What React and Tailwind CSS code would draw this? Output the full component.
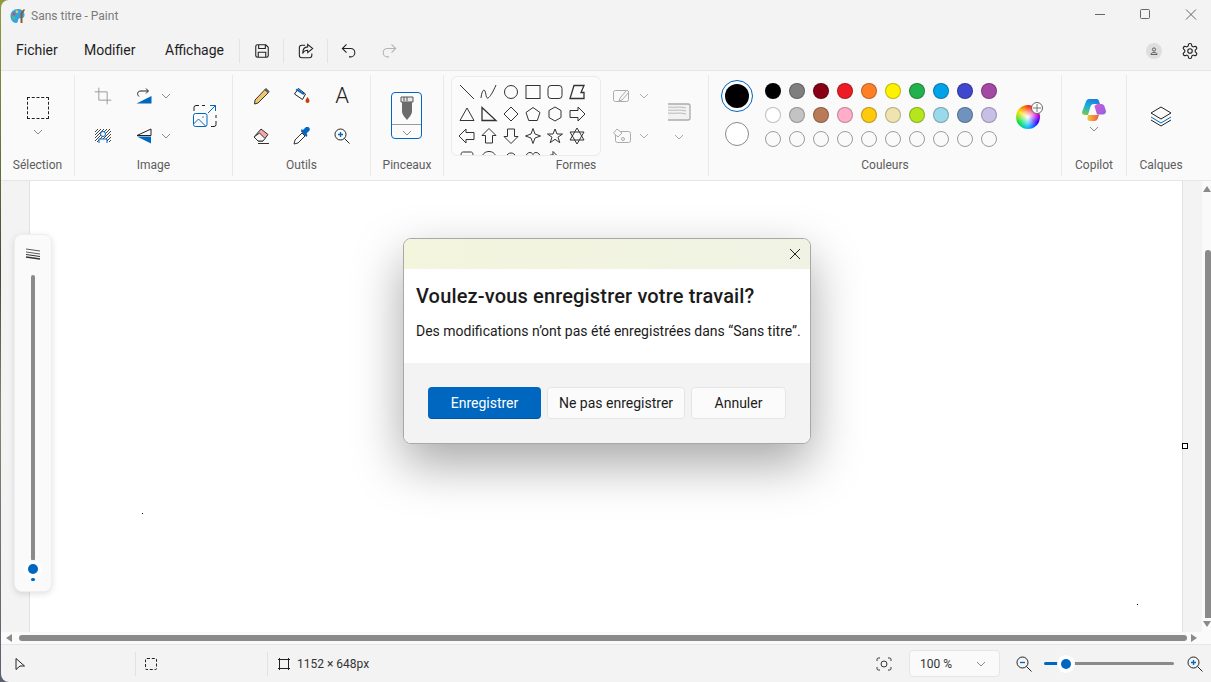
import React from "react";

const Chevron = ({ className = "" }) => (
  <svg width="10" height="6" viewBox="0 0 10 6" fill="none" stroke="#8a8a8a" strokeWidth="1" className={className}>
    <path d="M1 1l4 4 4-4" />
  </svg>
);

const Icon = ({ size = 24, children, className = "" }) => (
  <svg width={size} height={size} viewBox="0 0 24 24" fill="none" stroke="#222" strokeWidth="1" className={className}>
    {children}
  </svg>
);

const shapes = [
  <path d="M3 3l14 14" />,
  <path d="M2 16c1-8 3-9 4-7s1 8 3 7 5-6 8-13" />,
  <circle cx="10" cy="10" r="6.5" />,
  <rect x="3" y="3.5" width="14" height="13" />,
  <rect x="3" y="3.5" width="14" height="13" rx="3" />,
  <path d="M7 3.500h10l-3 7h3v6H3z" strokeWidth="1.300" />,
  <path d="M10 4l7 12.5H3z" />,
  <path d="M3 3.5l14 13H3z" strokeWidth="1.3" />,
  <path d="M10 3l7 7-7 7-7-7z" />,
  <path d="M10 3.5l7 5-2.7 8H5.7L3 8.5z" />,
  <path d="M10 3l6 3.5v7L10 17l-6-3.5v-7z" />,
  <path d="M3 6.5h8V3l7 7-7 7v-3.5H3z" />,
  <path d="M17 6.5H9V3l-7 7 7 7v-3.5h8z" />,
  <path d="M10 2.5l7 7h-3.5V17h-7V9.5H3z" />,
  <path d="M10 17.5l7-7h-3.5V3h-7v7.5H3z" />,
  <path d="M10 2.5l2 5.5 5.5 2-5.5 2-2 5.5-2-5.5-5.5-2 5.500-2z" />,
  <path d="M10 3l2 5h5.500l-4.500 3.200 1.800 5.500-4.800-3.400-4.800 3.400 1.800-5.500L2.500 8H8z" />,
  <path d="M10 2l7 12H3z M10 18L3 6h14z" />,
  <path d="M4 8c0-4 1-4 3-4h6c2 0 3 0 3 4" />,
  <path d="M3 9c1-4 4-5.500 7-5.500s6 1.500 7 5.500" />,
  <path d="M5 9c1-3 3-4 5-4s4 1 5 4" />,
  <path d="M3 9c0-3 2-4.500 4-4.500 1.500 0 2.500 1 3 2 .5-1 1.500-2 3-2 2 0 4 1.500 4 4.500" />,
  <path d="M5 9V7h3V3.500l4 4" />,
];

const topColors = ["#000000", "#7f7f7f", "#880015", "#ed1c24", "#ff7f27", "#fff200", "#22b14c", "#00a2e8", "#3f48cc", "#a349a4"];
const midColors = ["#ffffff", "#c3c3c3", "#b97a57", "#ffaec9", "#ffc90e", "#efe4b0", "#b5e61d", "#99d9ea", "#7092be", "#c8bfe7"];
const blankColors = Array(10).fill("transparent");

const Group = ({ label, width, children, last }) => (
  <div className={`flex h-[101px] shrink-0 flex-col ${last ? "" : "border-r border-[#e9e9e9]"}`} style={{ width }}>
    <div className="h-[81px] shrink-0">{children}</div>
    <div className="text-center text-[12px] leading-[18px] text-[#5d5d5d]">{label}</div>
  </div>
);

const IconCell = ({ children }) => <div className="flex h-6 w-6 items-center justify-center">{children}</div>;

function TitleBar() {
  return (
    <div className="flex h-[32px] items-center pl-[9px]">
      <svg width="16" height="16" viewBox="0 0 16 16">
        <path d="M8 1C3.500 1 .5 4 .5 8s2.500 7 5.500 7c1.500 0 2-1 2-2.500S9 10 11 10s3.500-.5 3.500-3C14.500 3.500 12 1 8 1z" fill="#35a4e0" />
        <circle cx="4" cy="6" r="1.400" fill="#e8483a" />
        <circle cx="7" cy="3.800" r="1.300" fill="#f6c945" />
        <circle cx="3.800" cy="10" r="1.400" fill="#5cc25a" />
        <path d="M11 4l3-3 1 1-2.500 3.500V15H10.500V6z" fill="#8a5a32" />
      </svg>
      <span className="ml-[5px] text-[12px] text-[#7a7a7a]">Sans titre - Paint</span>
      <div className="ml-auto flex items-center">
        <svg width="46" height="32" viewBox="0 0 46 32" stroke="#666" fill="none">
          <path d="M22 14.500h10" />
        </svg>
        <svg width="46" height="32" viewBox="0 0 46 32" stroke="#666" fill="none">
          <rect x="21.500" y="9.500" width="9" height="9" rx="1" />
        </svg>
        <svg width="46" height="32" viewBox="0 0 46 32" stroke="#666" fill="none">
          <path d="M21 9.500l10 10m0-10l-10 10" />
        </svg>
      </div>
    </div>
  );
}

function MenuBar() {
  return (
    <div className="flex h-[39px] items-center border-b border-[#e6e6e6] pb-[1px] text-[14px] text-[#1f1f1f]">
      <span className="ml-[15px] w-[40px]">Fichier</span>
      <span className="ml-[28px] w-[53px]">Modifier</span>
      <span className="ml-[28px] w-[58px]">Affichage</span>
      <div className="ml-[16px] h-[24px] border-l border-[#e3e3e3]" />
      <Icon size={20} className="ml-[12px] mr-[11px]">
        <path d="M4.500 6.500a2 2 0 0 1 2-2h10l3 3v10a2 2 0 0 1-2 2h-11a2 2 0 0 1-2-2z M8 4.500v4.500h8V4.500 M7.500 19.500v-6h9v6" strokeWidth="1.300" />
      </Icon>
      <div className="h-[24px] border-l border-[#e3e3e3]" />
      <Icon size={20} className="ml-[12px] mr-[11px]">
        <path d="M11 5H7a3 3 0 0 0-3 3v9a3 3 0 0 0 3 3h9a3 3 0 0 0 3-3v-2 M14 4l6 5-6 5v-3c-3 0-5 1-6 4 0-5 2-8 6-8z" strokeWidth="1.300" />
      </Icon>
      <div className="h-[24px] border-l border-[#e3e3e3]" />
      <Icon size={20} className="ml-[11px]">
        <path d="M9 4L4 9l5 5 M4 9h10a5 5 0 0 1 0 10h-2" strokeWidth="1.300" />
      </Icon>
      <Icon size={20} className="ml-[20px] opacity-30">
        <path d="M15 4l5 5-5 5 M20 9H10a5 5 0 0 0 0 10h2" strokeWidth="1.300" />
      </Icon>
      <div className="ml-auto mr-[12px] flex items-center gap-[19px]">
        <div className="flex h-4 w-4 items-center justify-center rounded-full bg-[#dedede]">
          <svg width="8" height="8" viewBox="0 0 8 8" fill="none" stroke="#444" strokeWidth=".8">
            <circle cx="4" cy="2.500" r="1.600" />
            <path d="M1 7.500c0-1.500 1-2 3-2s3 .5 3 2z" />
          </svg>
        </div>
        <svg width="18" height="18" viewBox="0 0 24 24" fill="none" stroke="#222" strokeWidth="1.500">
          <path d="M12.220 2h-.44a2 2 0 0 0-2 2v.18a2 2 0 0 1-1 1.730l-.43.250a2 2 0 0 1-2 0l-.15-.080a2 2 0 0 0-2.730.730l-.22.380a2 2 0 0 0 .730 2.730l.150.100a2 2 0 0 1 1 1.720v.510a2 2 0 0 1-1 1.740l-.150.090a2 2 0 0 0-.730 2.730l.220.380a2 2 0 0 0 2.730.730l.150-.080a2 2 0 0 1 2 0l.430.250a2 2 0 0 1 1 1.730V20a2 2 0 0 0 2 2h.440a2 2 0 0 0 2-2v-.180a2 2 0 0 1 1-1.730l.430-.250a2 2 0 0 1 2 0l.150.080a2 2 0 0 0 2.730-.730l.220-.390a2 2 0 0 0-.730-2.730l-.150-.080a2 2 0 0 1-1-1.740v-.500a2 2 0 0 1 1-1.740l.150-.090a2 2 0 0 0 .730-2.730l-.220-.380a2 2 0 0 0-2.730-.730l-.150.080a2 2 0 0 1-2 0l-.430-.250a2 2 0 0 1-1-1.730V4a2 2 0 0 0-2-2z" />
          <circle cx="12" cy="12" r="3" />
        </svg>
      </div>
    </div>
  );
}

function Ribbon() {
  return (
    <div className="flex h-[110px] items-start border-b border-[#e6e6e6] bg-[#fafafa] pt-[4px]">
      <Group label="Sélection" width={74}>
        <div className="ml-[26px] mt-[22px] h-[22px] w-[22px] border border-dashed border-[#222]" />
        <Chevron className="ml-[32px] mt-[10px]" />
      </Group>

      <Group label="Image" width={158}>
        <div className="grid grid-cols-[24px_41px_37px_24px] grid-rows-[24px_24px] items-center gap-y-4 pl-[16px] pt-[9px]">
          <IconCell>
            <Icon size={20} className="opacity-50">
              <path d="M7 2v15h15 M2 7h15v15" />
            </Icon>
          </IconCell>
          <div className="ml-[17px] flex h-6 w-6 items-center justify-center">
            <svg width="16" height="16" viewBox="0 0 16 16">
              <path d="M15.500 8v7.500H.5z" fill="#0067c0" />
              <path d="M3 8.500C.5 6 1.500 3 5 3h7M10 .5L12.500 3 10 5.500" fill="none" stroke="#222" />
            </svg>
          </div>
          <Chevron className="ml-[5px]" />
          <div className="row-span-2 flex h-6 w-6 items-center justify-center self-center">
            <svg width="24" height="24" viewBox="0 0 24 24" fill="none" stroke="#222">
              <path d="M1 7V3.500A2 2 0 0 1 3 1.500h3 M9 1.500h3 M23 11v3 M23 17v3.500a2 2 0 0 1-2 2h-3" />
              <path d="M15 9l7.500-7.500 M17 1.500h5.500V7" stroke="#0067c0" />
              <rect x=".5" y="9.500" width="13.500" height="13" rx="2" stroke="#0067c0" />
              <path d="M.5 20l5-5 7 7" stroke="#0067c0" />
              <circle cx="10" cy="13" r=".7" fill="#0067c0" stroke="none" />
            </svg>
          </div>
          <IconCell>
            <svg width="16" height="14" viewBox="0 0 16 14">
              <path d="M0 3l3-3M0 6l6-6M0 9l9-9M0 12L12 0M2 13L15 0M5 13L16 2M8 13l8-8M11 13l5-5M14 13l2-2" stroke="#444" strokeWidth="1" />
              <circle cx="8" cy="5" r="2.500" fill="#fafafa" stroke="#0067c0" />
              <path d="M4 14v-4h8v4" fill="#fafafa" stroke="#0067c0" />
            </svg>
          </IconCell>
          <div className="ml-[17px] flex h-6 w-6 items-center justify-center">
            <svg width="16" height="16" viewBox="0 0 16 16">
              <path d="M15 1v6.500H1z" fill="none" stroke="#222" />
              <path d="M15 15.500V8.500H1z" fill="#0067c0" />
            </svg>
          </div>
          <Chevron className="ml-[5px]" />
        </div>
      </Group>

      <Group label="Outils" width={138}>
        <div className="grid grid-cols-[24px_24px_24px] grid-rows-[24px_24px] gap-x-4 gap-y-4 pl-[17px] pt-[9px]">
          <IconCell>
            <svg width="18" height="18" viewBox="0 0 18 18">
              <path d="M2 13L12 2.500l3.500 3L5 16 1.500 17z" fill="#f2c66d" stroke="#333" />
              <path d="M12 2.500l1-1 3 3-1 1z" fill="#888" stroke="#333" />
            </svg>
          </IconCell>
          <IconCell>
            <svg width="18" height="18" viewBox="0 0 18 18">
              <path d="M5.500 1.500l7 5.500-3 5.500-8-5.500z" fill="#fff" stroke="#222" />
              <path d="M4 1.500l7.500 5-1 1.500L2.500 3z" fill="#0067c0" />
              <path d="M14.500 10c1 1.500 2 2.500 2 4a2 2 0 0 1-4 0c0-1.500 1-2.500 2-4z" fill="#c4400f" />
            </svg>
          </IconCell>
          <IconCell>
            <span className="text-[22px] font-light leading-none text-[#222]">A</span>
          </IconCell>
          <IconCell>
            <svg width="18" height="16" viewBox="0 0 18 16">
              <path d="M1 9l7-8 7 5.500L10 13H5z" fill="#f2a9a9" stroke="#333" />
              <path d="M1 9l4 4h5l2-2.500L6.500 5z" fill="#f7f7f7" stroke="#333" />
              <path d="M5 15.500h11" stroke="#333" />
            </svg>
          </IconCell>
          <IconCell>
            <svg width="18" height="18" viewBox="0 0 18 18">
              <path d="M9 6L2 13l-1 4 4-1 7-7z" fill="#fff" stroke="#333" />
              <path d="M8 4.500l5.500 5.500 1-2-1-1.500 3-3c.5-1 .5-2-.5-3s-2-1-3-.5l-3 3-1.500-1z" fill="#0067c0" />
            </svg>
          </IconCell>
          <IconCell>
            <svg width="16" height="16" viewBox="0 0 16 16" fill="none">
              <circle cx="6.500" cy="6.500" r="5.500" stroke="#222" />
              <path d="M10.500 10.500l5 5" stroke="#222" />
              <path d="M6.500 4v5M4 6.500h5" stroke="#0067c0" strokeWidth="1.300" />
            </svg>
          </IconCell>
        </div>
      </Group>

      <Group label="Pinceaux" width={73}>
        <div className="ml-[20px] mt-[17px] flex h-[47px] w-[31px] flex-col items-center rounded-[4px] border border-[#0067c0] bg-[#fbfbfb]">
          <svg width="16" height="30" viewBox="0 0 16 30" className="mt-[1px]">
            <path d="M2 3h12v5H2z" fill="#e6e6e6" stroke="#555" />
            <path d="M3 8h10v9c0 4-3 6-5 9-2-3-5-5-5-9z" fill="#6b6b6b" />
            <path d="M5 3v4M8 3v4" stroke="#555" />
          </svg>
          <div className="w-full border-t border-[#9a9a9a]" />
          <Chevron className="mt-[5px]" />
        </div>
      </Group>

      <Group label="Formes" width={265}>
        <div className="flex">
          <div className="ml-[7px] mt-[1px] h-[80px] w-[150px] shrink-0 overflow-hidden rounded-[6px] border border-[#ebebeb] bg-[#fbfbfb]">
            <div className="grid grid-cols-[repeat(6,22px)] grid-rows-[repeat(4,22px)] pl-[4px] pt-[4px]">
              {shapes.map((shape, i) => (
                <svg key={i} width="20" height="20" viewBox="0 0 20 20" fill="none" stroke="#333" className="m-[1px]">
                  {shape}
                </svg>
              ))}
            </div>
          </div>
          <div className="ml-[12px] mt-[9px] grid grid-cols-[18px_16px] grid-rows-[24px_24px] items-center gap-x-[8px] gap-y-4 opacity-70">
            <svg width="18" height="14" viewBox="0 0 18 14" fill="none" stroke="#8a8a8a">
              <rect x=".5" y="1.500" width="15" height="11" rx="2" />
              <path d="M6 12l1-3 7-8 2 2-7 8z" fill="#fafafa" />
            </svg>
            <Chevron />
            <svg width="18" height="16" viewBox="0 0 18 16" fill="none" stroke="#8a8a8a">
              <rect x="2.500" y="3.500" width="15" height="11" rx="2" />
              <path d="M4 1L.5 5 5 9l4-4z" fill="#fafafa" />
              <circle cx="10" cy="11" r="1.500" />
            </svg>
            <Chevron />
          </div>
          <div className="ml-[12px] mt-[27px] flex w-[24px] flex-col items-center opacity-70">
            <svg width="24" height="20" viewBox="0 0 24 20" fill="none" stroke="#8a8a8a">
              <rect x="1" y="1" width="22" height="17" rx="2" stroke="none" fill="#f0f0f0" />
              <path d="M1 2h20a2 2 0 0 1 2 2v12a2 2 0 0 1-2 2H1" strokeWidth="1.300" />
              <path d="M1 5c6 1 12-1 18 1M1 8c6 1 12-1 18 1M1 11c6 1 12-1 18 1" strokeWidth=".8" />
            </svg>
            <Chevron className="mt-[12px]" />
          </div>
        </div>
      </Group>

      <Group label="Couleurs" width={353}>
        <div className="flex">
          <div className="ml-[12px] mt-[5px] flex w-[32px] flex-col items-center">
            <div className="flex h-8 w-8 items-center justify-center rounded-full border border-[#0067c0] bg-white">
              <div className="h-6 w-6 rounded-full bg-black" />
            </div>
            <div className="mt-[10px] h-6 w-6 rounded-full border border-[#8a8a8a] bg-white" />
          </div>
          <div className="ml-[12px] mt-[8px] grid grid-cols-[repeat(10,16px)] grid-rows-[repeat(3,16px)] gap-2">
            {[...topColors, ...midColors].map((color, i) => (
              <div key={i} className="rounded-full border border-black/25" style={{ backgroundColor: color }} />
            ))}
            {blankColors.map((_, i) => (
              <div key={i} className="rounded-full border border-[#9c9c9c]" />
            ))}
          </div>
          <div className="relative ml-[19px] mt-[30px] h-6 w-6 rounded-full bg-[conic-gradient(#ff3000,#ff00c0,#3000ff,#00c0ff,#00e040,#ffe000,#ff3000)]">
            <div className="h-full w-full rounded-full bg-[radial-gradient(circle,#ffffff_0%,#ffffff00_65%)]" />
            <div className="absolute -right-[3px] -top-[3px] flex h-3 w-3 items-center justify-center rounded-full border border-[#666] bg-white">
              <svg width="8" height="8" viewBox="0 0 8 8" stroke="#777">
                <path d="M4 0v8M0 4h8" />
              </svg>
            </div>
          </div>
        </div>
      </Group>

      <Group label="Copilot" width={65}>
        <div className="flex flex-col items-center pt-[24px]">
          <svg width="24" height="22" viewBox="0 0 24 22">
            <defs>
              <linearGradient id="copA" x1="0.6" y1="0" x2="0.2" y2="1">
                <stop offset="0" stopColor="#1b7fe0" />
                <stop offset="0.5" stopColor="#1bb0d8" />
                <stop offset="1" stopColor="#7cc84a" />
              </linearGradient>
              <linearGradient id="copB" x1="0" y1="0" x2="1" y2="1">
                <stop offset="0" stopColor="#d85ad0" />
                <stop offset="1" stopColor="#8d62e8" />
              </linearGradient>
              <linearGradient id="copD" x1="0" y1="0" x2="1" y2="0">
                <stop offset="0" stopColor="#f2c93a" />
                <stop offset="1" stopColor="#ee5a3a" />
              </linearGradient>
            </defs>
            <path d="M7 0h7c1.500 0 2.500.5 3 2l1 3h-6c-2 0-3 1-3.500 2.500L6 16H3c-2 0-3.500-1.500-2.800-3.500L4 2.500C4.500 1 5.500 0 7 0z" fill="url(#copA)" />
            <path d="M18 5h1.500c1.500 0 2.500 1 3 2.500l1.300 4c.6 2-.6 4-3 4H15l-2.500-8c.5-1.500 2-2.500 3.500-2.500z" fill="url(#copB)" />
            <path d="M6 16h9.500l1.500-.5-1 3.500c-.5 2-2 3-3.500 3H8c-2 0-3-1.500-2.500-3.500z" fill="url(#copD)" />
          </svg>
          <Chevron className="mt-[5px]" />
        </div>
      </Group>

      <Group label="Calques" width={68} last>
        <div className="flex justify-center pt-[29px]">
          <svg width="24" height="24" viewBox="0 0 24 24" fill="none" stroke="#222">
            <path d="M12 3l10 6-10 6L2 9z" />
            <path d="M2 13l10 6 10-6" stroke="#0067c0" />
            <path d="M2 16l10 6 10-6" />
          </svg>
        </div>
      </Group>
    </div>
  );
}

function CanvasArea() {
  return (
    <div className="relative flex min-h-0 flex-1 flex-col">
      <div className="flex min-h-0 flex-1">
        <div className="w-[29px] shrink-0 border-r border-[#e2e2e2]" />
        <div className="relative flex-1 bg-white">
          <div className="absolute left-[112px] top-[332px] h-px w-px bg-black" />
          <div className="absolute left-[1107px] top-[423px] h-px w-px bg-black" />
        </div>
        <div className="relative w-[20px] shrink-0 border-l border-[#e2e2e2]">
          <div className="absolute -left-[1px] top-[262px] h-[6px] w-[6px] border border-black bg-white" />
        </div>
        {/* vertical scrollbar */}
        <div className="flex w-[9px] shrink-0 flex-col items-end bg-[#fafafa]">
          <div className="mt-[5px] h-0 w-0 border-x-[4px] border-b-[6px] border-x-transparent border-b-[#8a8a8a]" />
          <div className="mt-[58px] w-[6px] flex-1 rounded-t-full bg-[#8a8a8a]" />
          <div className="mb-[5px] mt-[3px] h-0 w-0 border-x-[4px] border-t-[6px] border-x-transparent border-t-[#8a8a8a]" />
        </div>
      </div>
      {/* horizontal scrollbar */}
      <div className="flex h-[13px] shrink-0 items-center border-b border-[#e6e6e6] bg-[#fafafa] pl-[5px] pr-[14px]">
        <div className="h-0 w-0 border-y-[4px] border-r-[6px] border-y-transparent border-r-[#8a8a8a]" />
        <div className="ml-[7px] h-[6px] flex-1 rounded-full bg-[#8a8a8a]" />
        <div className="ml-[4px] h-0 w-0 border-y-[4px] border-l-[6px] border-y-transparent border-l-[#8a8a8a]" />
      </div>

      {/* brush size slider */}
      <div className="absolute left-[13px] top-[53px] flex h-[358px] w-[38px] flex-col items-center rounded-[8px] border border-[#eeeeee] bg-[#fafafa] shadow-[0_2px_6px_rgba(0,0,0,0.12)]">
        <svg width="16" height="12" viewBox="0 0 16 12" fill="none" stroke="#333" className="mt-[13px]">
          <path d="M1 1l14 2M1 4l14 2" strokeWidth=".8" />
          <path d="M1 6.500l14 2" strokeWidth="1" />
          <path d="M1 9l14 2" strokeWidth="1.400" />
        </svg>
        <div className="mt-[15px] h-[286px] w-1 rounded-full bg-[#8a8a8a]" />
        <div className="relative -mt-[1px] flex h-[18px] w-[18px] items-center justify-center rounded-full bg-white">
          <div className="h-[10px] w-[10px] rounded-full bg-[#0067c0]" />
        </div>
        <div className="h-[3px] w-[4px] rounded-full bg-[#0067c0]" />
      </div>
    </div>
  );
}

function StatusBar() {
  return (
    <div className="flex h-[37px] shrink-0 items-center text-[12px] text-[#333]">
      <div className="flex h-[24px] w-[135px] items-center border-r border-[#e2e2e2] pl-[13px]">
        <svg width="12" height="14" viewBox="0 0 12 14" fill="none" stroke="#222">
          <path d="M2 1.500l8.500 7.500H6l-4 3.500z" />
        </svg>
      </div>
      <div className="flex h-[24px] w-[132px] items-center border-r border-[#e2e2e2] pl-[9px]">
        <div className="h-[12px] w-[12px] rounded-[2px] border border-dashed border-[#222]" />
      </div>
      <div className="flex items-center pl-[9px]">
        <svg width="14" height="14" viewBox="0 0 14 14" fill="none" stroke="#222">
          <rect x="2.500" y="2.500" width="9" height="9" />
          <path d="M1 2.500h2M11 2.500h2M1 11.500h2M11 11.500h2M2.500 1v2M11.500 1v2M2.500 11v2M11.500 11v2" />
        </svg>
        <span className="ml-[6px]">1152 × 648px</span>
      </div>
      <div className="ml-auto flex items-center pr-[8px]">
        <svg width="16" height="14" viewBox="0 0 16 14" fill="none" stroke="#333">
          <path d="M1 4V2.500A1.500 1.500 0 0 1 2.500 1H4M12 1h1.500A1.500 1.500 0 0 1 15 2.500V4M15 10v1.500a1.500 1.500 0 0 1-1.500 1.500H12M4 13H2.500A1.500 1.500 0 0 1 1 11.500V10" />
          <circle cx="8" cy="7" r="3" />
        </svg>
        <div className="ml-[17px] flex h-[27px] w-[91px] items-center rounded-[4px] border border-[#e5e5e5] bg-[#fafafa] pl-[10px] pr-[13px]">
          <span>100 %</span>
          <Chevron className="ml-auto" />
        </div>
        <svg width="16" height="16" viewBox="0 0 16 16" fill="none" className="ml-[16px]">
          <circle cx="6.500" cy="6.500" r="5.500" stroke="#222" />
          <path d="M10.500 10.500l5 5" stroke="#222" />
          <path d="M4 6.500h5" stroke="#0067c0" strokeWidth="1.300" />
        </svg>
        <div className="relative ml-[12px] flex h-[18px] w-[130px] items-center">
          <div className="h-[3px] w-[20px] rounded-l-full bg-[#0067c0]" />
          <div className="h-[3px] flex-1 rounded-r-full bg-[#8a8a8a]" />
          <div className="absolute left-[13px] flex h-[18px] w-[18px] items-center justify-center rounded-full bg-white">
            <div className="h-[10px] w-[10px] rounded-full bg-[#0067c0]" />
          </div>
        </div>
        <svg width="16" height="16" viewBox="0 0 16 16" fill="none" className="ml-[13px]">
          <circle cx="6.500" cy="6.500" r="5.500" stroke="#222" />
          <path d="M10.500 10.500l5 5" stroke="#222" />
          <path d="M6.500 4v5M4 6.500h5" stroke="#0067c0" strokeWidth="1.300" />
        </svg>
      </div>
    </div>
  );
}

function SaveDialog() {
  return (
    <div className="absolute left-[403px] top-[238px] flex h-[206px] w-[408px] flex-col overflow-hidden rounded-[8px] border border-[#a8a8a8] bg-white shadow-[0_20px_50px_rgba(0,0,0,0.35)]">
      <div className="flex h-[30px] shrink-0 items-center justify-end bg-[linear-gradient(90deg,#f3f5dd,#f0f3e4)] pr-[9px]">
        <svg width="12" height="12" viewBox="0 0 12 12" stroke="#222" fill="none">
          <path d="M1 1l10 10M11 1L1 11" />
        </svg>
      </div>
      <div className="h-[94px] shrink-0 px-[12px] pt-[13px]">
        <div className="whitespace-nowrap text-[20px] font-medium leading-[28px] tracking-[0.16px] text-[#1b1b1b]">Voulez-vous enregistrer votre travail?</div>
        <div className="mt-[11px] whitespace-nowrap text-[14px] leading-[20px] text-[#1b1b1b]">Des modifications n’ont pas été enregistrées dans “Sans titre”.</div>
      </div>
      <div className="flex flex-1 items-start bg-[#f3f3f3] pl-[24px] pt-[24px] text-[14px]">
        <button className="h-8 w-[113px] rounded-[4px] border border-transparent border-b-[#00559e] bg-[#0067c0] text-white">Enregistrer</button>
        <button className="ml-[6px] h-8 w-[138px] rounded-[4px] border border-[#e5e5e5] bg-[#fbfbfb] text-[#1b1b1b]">Ne pas enregistrer</button>
        <button className="ml-[6px] h-8 w-[95px] rounded-[4px] border border-[#e5e5e5] bg-[#fbfbfb] text-[#1b1b1b]">Annuler</button>
      </div>
    </div>
  );
}

export default function App() {
  return (
    <div className="relative h-[682px] w-[1211px] overflow-hidden bg-[linear-gradient(180deg,#8f9a40_0%,#6b7a3a_20%,#3f4a3a_40%,#8a8270_60%,#5a6070_100%)] font-['Roboto','Noto_Sans',sans-serif]">
      <div className="ml-[1px] flex h-full flex-col overflow-hidden rounded-tl-[8px] rounded-bl-[8px] bg-[#f3f3f3]">
        <TitleBar />
        <MenuBar />
        <Ribbon />
        <CanvasArea />
        <StatusBar />
      </div>
      <SaveDialog />
    </div>
  );
}
